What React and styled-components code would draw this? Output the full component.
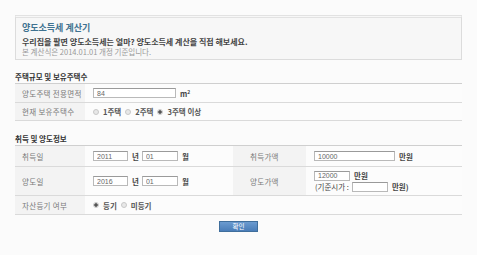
import React from 'react'
import styled, { createGlobalStyle } from 'styled-components'

const GlobalStyle = createGlobalStyle`
  html, body {
    margin: 0;
    padding: 0;
    background: #ffffff;
  }
  body {
    font-family: "Noto Sans CJK KR", "Noto Sans", sans-serif;
    color: #555;
  }
  * { box-sizing: border-box; }
`

function Radio({ checked, label }) {
  return (
    <RadioItem>
      <RadioDot $checked={checked} />
      <RadioLabel>{label}</RadioLabel>
    </RadioItem>
  )
}

function App() {
  return (
    <>
      <GlobalStyle />
      <Page>
        <Intro>
          <Title>양도소득세 계산기</Title>
          <Lead>우리집을 팔면 양도소득세는 얼마? 양도소득세 계산을 직접 해보세요.</Lead>
          <Note>본 계산식은 2014.01.01 개정 기준입니다.</Note>
        </Intro>

        <SectionTitle $top={11}>주택규모 및 보유주택수</SectionTitle>
        <Table>
          <Row $h={19}>
            <Label $w={70}>양도주택 전용면적</Label>
            <Cell>
              <Input $w={83} defaultValue="84" readOnly />
              <Unit>m<Sup>2</Sup></Unit>
            </Cell>
          </Row>
          <Row $h={18}>
            <Label $w={70}>현재 보유주택수</Label>
            <Cell>
              <Radio label="1주택" />
              <Radio label="2주택" />
              <Radio checked label="3주택 이상" />
            </Cell>
          </Row>
        </Table>

        <SectionTitle $top={12}>취득 및 양도정보</SectionTitle>
        <Table>
          <Row $h={21}>
            <Label $w={70}>취득일</Label>
            <Cell $w={148}>
              <Input $w={35} defaultValue="2011" readOnly />
              <Unit>년</Unit>
              <Input $w={36} defaultValue="01" readOnly />
              <Unit>월</Unit>
            </Cell>
            <Label $w={73} $inset>취득가액</Label>
            <Cell>
              <Input $w={81} defaultValue="10000" readOnly />
              <Unit>만원</Unit>
            </Cell>
          </Row>
          <Row $h={29}>
            <Label $w={70}>양도일</Label>
            <Cell $w={148}>
              <Input $w={35} defaultValue="2016" readOnly />
              <Unit>년</Unit>
              <Input $w={36} defaultValue="01" readOnly />
              <Unit>월</Unit>
            </Cell>
            <Label $w={73} $inset>양도가액</Label>
            <Cell $stack>
              <Line>
                <Input $w={36} defaultValue="12000" readOnly />
                <Unit>만원</Unit>
              </Line>
              <Line>
                <Unit $plain>(기준시가 :</Unit>
                <Input $w={36} defaultValue="" readOnly />
                <Unit>만원)</Unit>
              </Line>
            </Cell>
          </Row>
          <Row $h={19}>
            <Label $w={70}>자산등기 여부</Label>
            <Cell>
              <Radio checked label="등기" />
              <Radio label="미등기" />
            </Cell>
          </Row>
        </Table>

        <Actions>
          <Button type="button">확인</Button>
        </Actions>
      </Page>
    </>
  )
}

export default App

const Page = styled.div`
  width: 477px;
  height: 255px;
  padding: 15px 15px 0 15px;
  background: #fbfbfb;
`
const Intro = styled.div`
  width: 447px;
  height: 45px;
  border: 1px solid #dcdcdc;
  border-top: 3px double #e2e2e2;
  background: #f7f7f7;
  padding: 3px 6px 0 6px;
`
const Title = styled.div`
  font-size: 9px;
  font-weight: 700;
  line-height: 13px;
  color: #3f7290;
  margin-bottom: 3px;
`
const Lead = styled.div`
  font-size: 8px;
  font-weight: 700;
  line-height: 10px;
  color: #444;
`
const Note = styled.div`
  font-size: 7.5px;
  line-height: 9px;
  color: #999;
`
const SectionTitle = styled.div`
  margin-top: ${p => p.$top}px;
  height: 12px;
  font-size: 7.5px;
  font-weight: 700;
  line-height: 12px;
  color: #333;
`
const Table = styled.div`
  width: 447px;
  border-top: 1px solid #cfcfcf;
  background: #fcfcfc;
`
const Row = styled.div`
  display: flex;
  height: ${p => p.$h}px;
  border-bottom: 1px solid #dadada;
`
const Label = styled.div`
  flex: 0 0 ${p => p.$w}px;
  display: flex;
  align-items: center;
  padding-left: ${p => (p.$inset ? 17 : 7)}px;
  background: #f3f3f3;
  font-size: 7.5px;
  color: #7a7a7a;
  letter-spacing: 0.3px;
`
const Cell = styled.div`
  ${p => (p.$w ? `flex: 0 0 ${p.$w}px;` : 'flex: 1;')}
  display: flex;
  flex-direction: ${p => (p.$stack ? 'column' : 'row')};
  justify-content: ${p => (p.$stack ? 'center' : 'flex-start')};
  align-items: ${p => (p.$stack ? 'flex-start' : 'center')};
  padding-left: 8px;
  gap: ${p => (p.$stack ? 0 : 3)}px;
`
const Line = styled.div`
  display: flex;
  align-items: center;
  gap: 3px;
  height: 11px;
`
const Input = styled.input`
  width: ${p => p.$w}px;
  height: 10px;
  border: 1px solid #b9b9b9;
  border-top-color: #9a9a9a;
  background: #fff;
  padding: 0 3px;
  font-family: "Liberation Sans", sans-serif;
  font-size: 7px;
  color: #666;
  outline: none;
`
const Unit = styled.span`
  font-size: 7.5px;
  font-weight: ${p => (p.$plain ? 400 : 700)};
  color: #444;
  padding-left: 1px;
`
const Sup = styled.sup`
  font-size: 5px;
  vertical-align: 3px;
`
const RadioItem = styled.span`
  display: inline-flex;
  align-items: center;
  gap: 4px;
  margin-right: 1px;
`
const RadioDot = styled.span`
  width: 6px;
  height: 6px;
  border-radius: 50%;
  border: 1px solid #c8c8c8;
  background: ${p => (p.$checked ? 'radial-gradient(circle, #555 0 1.5px, #e6e6e6 2px)' : '#e8e8e8')};
`
const RadioLabel = styled.span`
  font-size: 7.5px;
  font-weight: 700;
  color: #555;
`
const Actions = styled.div`
  width: 447px;
  display: flex;
  justify-content: center;
  padding-top: 6px;
`
const Button = styled.button`
  width: 39px;
  height: 11px;
  padding: 0;
  border: 1px solid #3f6e9c;
  background: linear-gradient(#6b9bd0, #4a7db8);
  color: #fff;
  font-family: "Noto Sans CJK KR", sans-serif;
  font-size: 6.5px;
  line-height: 9px;
`
